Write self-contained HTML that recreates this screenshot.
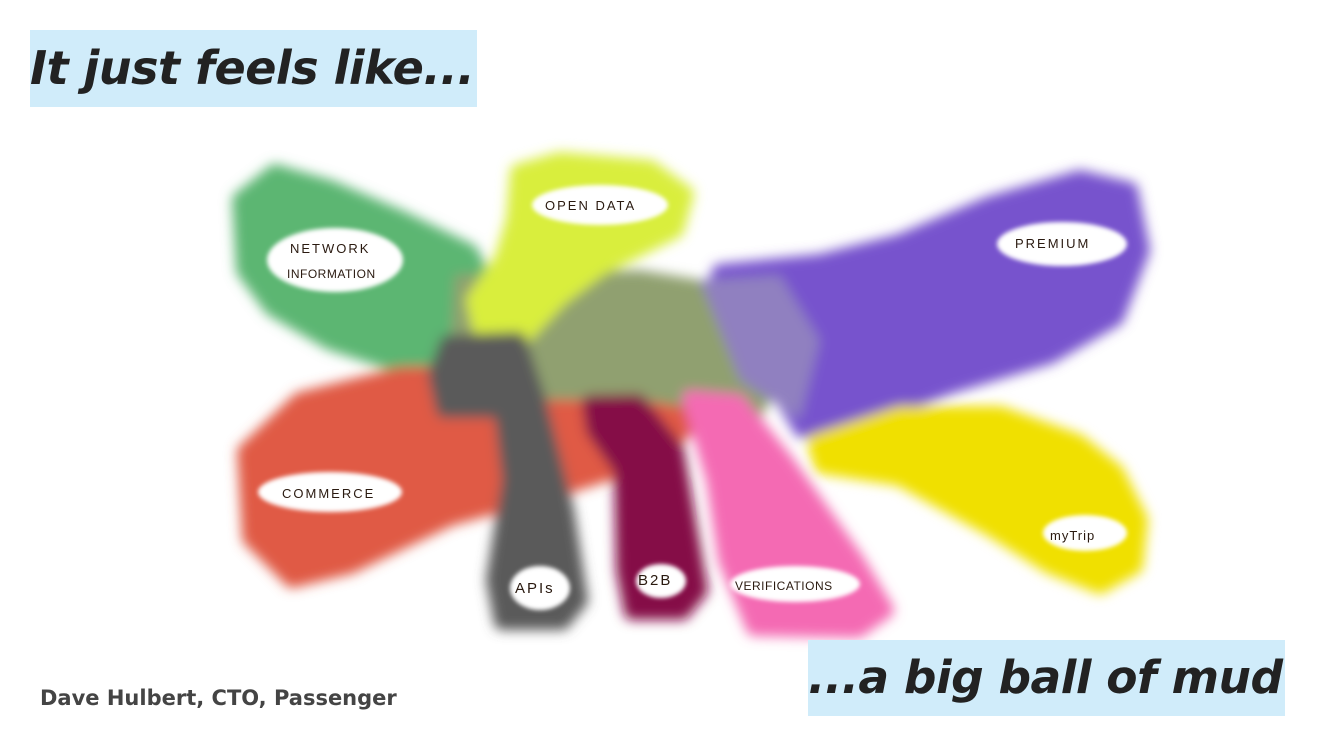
<!DOCTYPE html>
<html><head><meta charset="utf-8"><style>
html,body{margin:0;padding:0;background:#fff;width:1333px;height:749px;overflow:hidden;position:relative;font-family:"DejaVu Sans",sans-serif}
.box{position:absolute;background:#d0ecfa;color:#222;font-weight:bold;font-style:italic;white-space:nowrap;font-family:"DejaVu Sans",sans-serif}
#t1{left:30px;top:30px;width:447px;height:77px;font-size:46px;line-height:77px;letter-spacing:-0.5px}
#t2{left:808px;top:640px;width:477px;height:76px;font-size:45.5px;line-height:76px;letter-spacing:-0.5px}
#auth{position:absolute;left:40px;top:686px;font-size:21px;font-weight:bold;color:#444}
svg{position:absolute;left:0;top:0}
.lb{font-family:"Liberation Sans",sans-serif;font-size:13px;fill:#2a1a10;letter-spacing:2px}
</style></head><body>
<svg width="1333" height="749" viewBox="0 0 1333 749">
<defs><filter id="b" x="-20%" y="-20%" width="140%" height="140%"><feGaussianBlur stdDeviation="6"/></filter>
<filter id="b2" x="-20%" y="-20%" width="140%" height="140%"><feGaussianBlur stdDeviation="2"/></filter></defs>
<g filter="url(#b)" stroke-linejoin="round" stroke-width="16">
<path fill="#5bb672" stroke="#5bb672" d="M240,200 L275,172 L330,188 L400,218 L470,252 L495,300 L460,355 L400,365 L330,342 L272,308 L244,270Z"/>
<path fill="#e05a44" stroke="#e05a44" d="M245,452 L300,400 L400,375 L550,372 L648,368 L695,420 L655,458 L560,488 L450,518 L350,566 L292,580 L250,538Z"/>
<path fill="#7753cd" stroke="#7753cd" d="M720,272 L820,262 L900,242 L990,204 L1080,178 L1130,190 L1142,250 L1116,318 L1050,356 L950,386 L870,416 L802,430 L772,380 L705,320Z"/>
<path fill="#f0e000" stroke="#f0e000" d="M815,442 L900,414 L1000,414 L1078,442 L1116,472 L1140,520 L1135,566 L1100,586 L1050,566 L990,528 L900,478 L822,466Z"/>
<path fill="#90a070" stroke="none" d="M455,275 L640,270 L760,290 L790,360 L760,420 L640,400 L500,400 L450,360Z"/>
<path fill="#9080c0" stroke="none" d="M700,280 L780,275 L820,340 L800,420 L740,380Z"/>
<path fill="#d9ee3c" stroke="#d9ee3c" d="M518,172 L560,160 L650,168 L686,194 L676,230 L600,268 L560,298 L520,340 L482,336 L474,300 L502,260 L514,220Z"/>
<path fill="#5a5a5a" stroke="#5a5a5a" d="M448,343 L518,340 L538,400 L566,510 L580,600 L562,622 L502,622 L494,580 L510,480 L502,410 L444,410 L436,375Z"/>
<path fill="#850a47" stroke="#850a47" d="M590,403 L638,402 L676,450 L700,590 L682,612 L632,612 L624,570 L622,470 L594,430Z"/>
<path fill="#f46ab3" stroke="#f46ab3" d="M690,398 L738,402 L786,462 L856,560 L886,610 L858,630 L754,628 L726,560 L714,480Z"/>
</g>
<g filter="url(#b2)" fill="#fff">
<ellipse cx="335" cy="260" rx="68" ry="32"/>
<ellipse cx="600" cy="205" rx="68" ry="20"/>
<ellipse cx="1062" cy="244" rx="65" ry="22"/>
<ellipse cx="330" cy="492" rx="72" ry="20"/>
<ellipse cx="1085" cy="533" rx="42" ry="18"/>
<ellipse cx="540" cy="588" rx="30" ry="22"/>
<ellipse cx="661" cy="581" rx="25" ry="17"/>
<ellipse cx="795" cy="584" rx="65" ry="18"/>
</g>
<text class="lb" x="290" y="253">NETWORK</text>
<text class="lb" x="287" y="278" style="letter-spacing:0.5px;font-size:12px">INFORMATION</text>
<text class="lb" x="545" y="210">OPEN DATA</text>
<text class="lb" x="1015" y="248">PREMIUM</text>
<text class="lb" x="282" y="498">COMMERCE</text>
<text class="lb" x="1050" y="540" style="letter-spacing:1px">myTrip</text>
<text class="lb" x="515" y="593" style="font-size:15px">APIs</text>
<text class="lb" x="638" y="585" style="font-size:15px">B2B</text>
<text class="lb" x="735" y="590" style="letter-spacing:0.5px;font-size:12px">VERIFICATIONS</text>
</svg>
<div class="box" id="t1">It just feels like...</div>
<div class="box" id="t2">...a big ball of mud</div>
<div id="auth">Dave Hulbert, CTO, Passenger</div>
</body></html>
